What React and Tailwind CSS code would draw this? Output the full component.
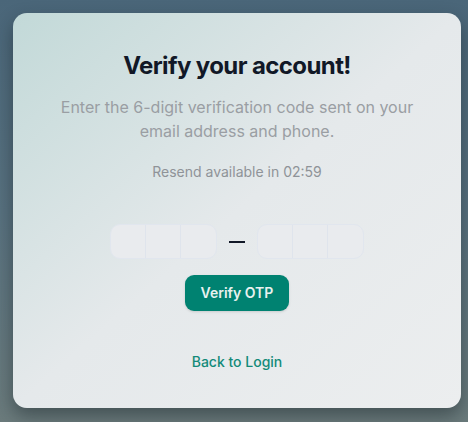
import { useState } from 'react';

export default function App() {
    const [code, setCode] = useState(['', '', '', '', '', '']);

    const setDigit = (i, v) => {
        const next = [...code];
        next[i] = v.slice(-1);
        setCode(next);
    };

    const cell = (i, last) => (
        <input
            key={i}
            value={code[i]}
            onChange={(e) => setDigit(i, e.target.value)}
            maxLength={1}
            className={`w-[35px] h-full bg-transparent text-center text-lg text-[#111827] outline-none ${last ? '' : 'border-r border-[#dfe4ec]'}`}
        />
    );

    return (
        <div className="w-[468px] h-[422px] overflow-hidden bg-linear-to-b from-[#4a6679] via-[#58717f] to-[#6b7b7c] flex items-start pl-[13px] pt-[13px] font-['Inter',sans-serif]">
            <div className="w-[448px] h-[395px] rounded-[14px] bg-linear-to-br from-[#c2d9d8] via-[#e5e9eb] to-[#eceeef] shadow-[0_8px_18px_rgba(20,30,35,0.45)] flex flex-col items-center pt-[37px]">
                <h1 className="text-2xl leading-8 font-bold text-[#111827] tracking-[-0.6px]">Verify your account!</h1>
                <p className="mt-[13px] text-base leading-6 text-[#9a9ea3] text-center w-[370px]">
                    Enter the 6-digit verification code sent on your email address and phone.
                </p>
                <p className="mt-[19px] text-sm leading-5 text-[#8f9398]">Resend available in 02:59</p>

                <div className="mt-[42px] flex items-center gap-3 h-[35px]">
                    <div className="flex h-full rounded-[10px] border border-[#e1e6ee] bg-[#e9ebee]">
                        {cell(0)}{cell(1)}{cell(2, true)}
                    </div>
                    <div className="w-4 h-[2px] bg-[#111827]" />
                    <div className="flex h-full rounded-[10px] border border-[#e1e6ee] bg-[#e9ebee]">
                        {cell(3)}{cell(4)}{cell(5, true)}
                    </div>
                </div>

                <button className="mt-4 w-[104px] h-9 rounded-[9px] bg-[#008271] text-[#e8f1ef] text-sm font-semibold shadow-sm">
                    Verify OTP
                </button>

                <a href="#" className="mt-[41px] text-sm leading-5 font-medium text-[#138a79]">Back to Login</a>
            </div>
        </div>
    );
}
